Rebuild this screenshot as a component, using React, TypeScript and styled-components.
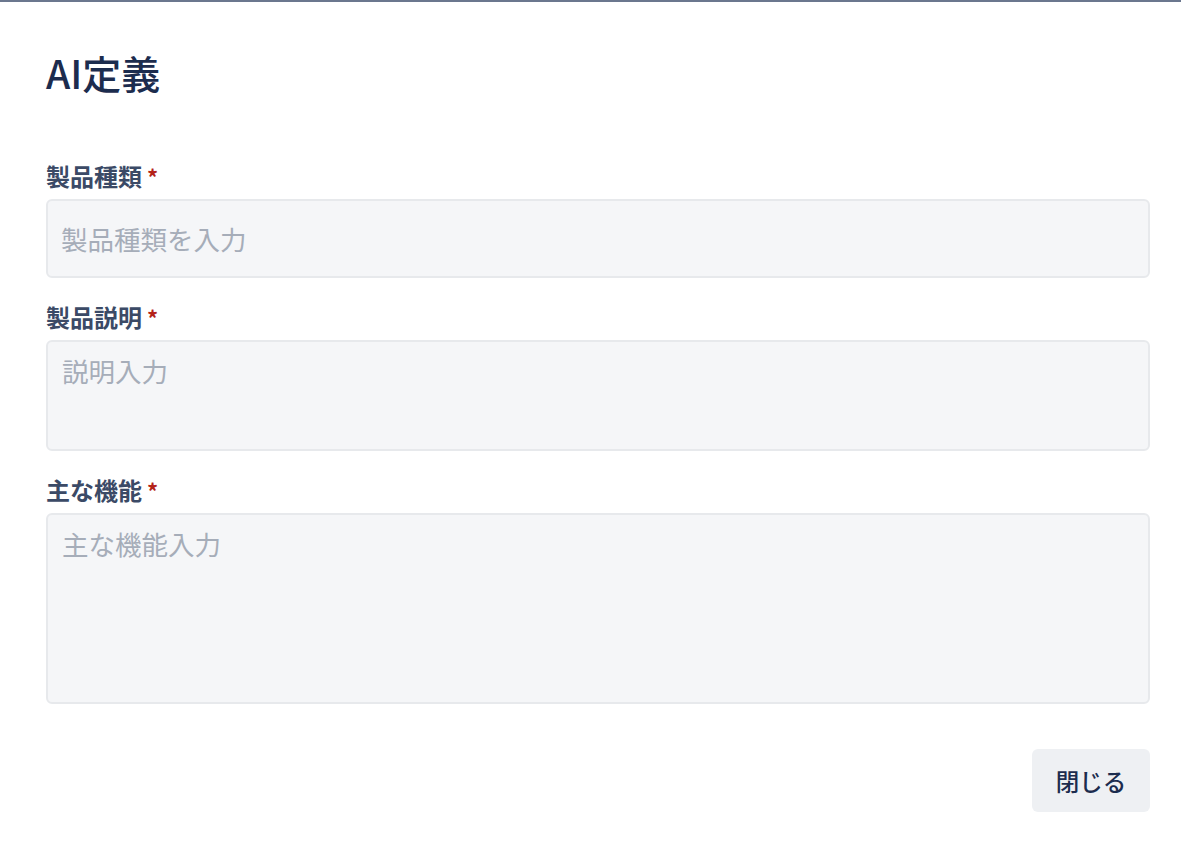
import React from 'react';
import { styled, createGlobalStyle } from 'styled-components';

const GlobalStyle = createGlobalStyle`
  html, body {
    margin: 0;
    padding: 0;
    background: #ffffff;
  }
  body {
    font-family: "Noto Sans CJK JP", "Noto Sans", sans-serif;
  }
`;

type Field = {
  label: string;
  placeholder: string;
  height: number;
  multiline: boolean;
};

const fields: Field[] = [
  { label: '製品種類', placeholder: '製品種類を入力', height: 79, multiline: false },
  { label: '製品説明', placeholder: '説明入力', height: 111, multiline: true },
  { label: '主な機能', placeholder: '主な機能入力', height: 191, multiline: true },
];

const App: React.FC = () => {
  return (
    <>
      <GlobalStyle />
      <Modal>
        <Title>AI定義</Title>
        <Form>
          {fields.map((f) => (
            <Group key={f.label}>
              <Label>
                {f.label}
                <Required>*</Required>
              </Label>
              {f.multiline ? (
                <TextArea placeholder={f.placeholder} $height={f.height} />
              ) : (
                <TextInput placeholder={f.placeholder} $height={f.height} />
              )}
            </Group>
          ))}
        </Form>
        <Footer>
          <CloseButton>閉じる</CloseButton>
        </Footer>
      </Modal>
    </>
  );
};

const Modal = styled.div`
  box-sizing: border-box;
  min-height: 855px;
  border-top: 2px solid #6b778e;
  padding: 41px 31px 43px 46px;
  background: #fff;
`;

const Title = styled.h1`
  margin: 0;
  font-size: 39px;
  line-height: 58px;
  font-weight: 500;
  color: #1c2c4e;
`;

const Form = styled.div`
  margin-top: 57px;
  display: flex;
  flex-direction: column;
  gap: 21px;
`;

const Group = styled.div`
  display: flex;
  flex-direction: column;
  gap: 5px;
`;

const Label = styled.label`
  font-size: 24px;
  line-height: 36px;
  font-weight: 700;
  color: #3b4a66;
  display: flex;
  align-items: center;
  gap: 5px;
`;

const Required = styled.span`
  color: #b42318;
  font-size: 22px;
`;

const fieldBase = `
  box-sizing: border-box;
  width: 100%;
  border: 2px solid #e7e9ec;
  border-radius: 6px;
  background: #f5f6f8;
  font-family: "Noto Sans CJK JP", "Noto Sans", sans-serif;
  font-size: 26.5px;
  color: #1c2c4e;
  outline: none;
  &::placeholder {
    color: #a6adb9;
  }
`;

const TextInput = styled.input<{ $height: number }>`
  ${fieldBase}
  height: ${(p) => p.$height}px;
  padding: 0 13px;
`;

const TextArea = styled.textarea<{ $height: number }>`
  ${fieldBase}
  height: ${(p) => p.$height}px;
  padding: 11px 14px;
  line-height: 36px;
  resize: none;
`;

const Footer = styled.div`
  display: flex;
  justify-content: flex-end;
  margin-top: 45px;
`;

const CloseButton = styled.button`
  width: 118px;
  height: 63px;
  border: none;
  border-radius: 6px;
  background: #eef0f3;
  color: #1c2c4e;
  font-family: "Noto Sans CJK JP", "Noto Sans", sans-serif;
  font-size: 23.5px;
  font-weight: 500;
  cursor: pointer;
`;

export default App;
